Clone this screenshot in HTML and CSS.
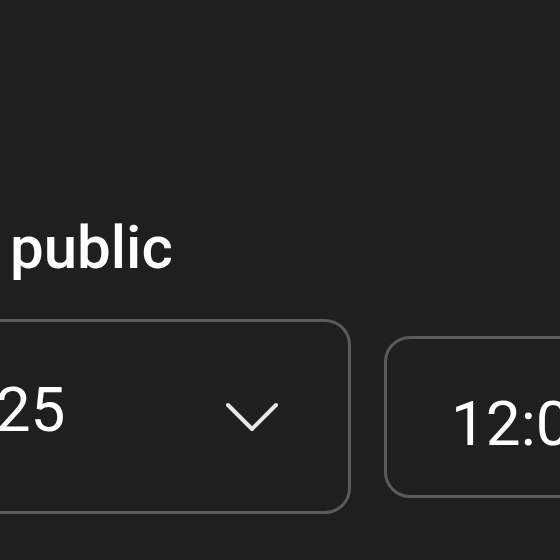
FILE: index.html
```html
<!DOCTYPE html>
<html>
<head>
<meta charset="utf-8">
<link rel="stylesheet" href="styles.css">
</head>
<body>
<div class="page">
  <p class="label">public</p>
  <div class="row">
    <div class="field date">
      <span class="value">2025</span>
      <svg class="chevron" width="52" height="30" viewBox="0 0 52 30"><polyline points="2,3 26,27 50,3" fill="none" stroke="#e8e8e8" stroke-width="4" stroke-linecap="round" stroke-linejoin="round"/></svg>
    </div>
    <div class="field time">
      <span class="value">12:00 PM</span>
    </div>
  </div>
</div>
</body>
</html>
```
FILE: styles.css
```css
html, body {
  margin: 0;
  padding: 0;
  background: #1f1f1f;
  overflow: hidden;
}
.page {
  width: 560px;
  height: 560px;
  padding-top: 212px;
  box-sizing: border-box;
  font-family: Roboto, "Noto Sans", sans-serif;
  color: #ffffff;
}
.label {
  margin: 0 0 0 10px;
  font-size: 60px;
  line-height: 72px;
  font-weight: 500;
  white-space: nowrap;
}
.row {
  display: flex;
  align-items: center;
  gap: 33px;
  margin-top: 35px;
  margin-left: -105px;
}
.field {
  flex: none;
  box-sizing: border-box;
  border: 3px solid #5a5a5a;
  border-radius: 26px;
  display: flex;
  align-items: center;
}
.date {
  width: 456px;
  height: 195px;
  padding: 0 70px 0 28px;
  justify-content: space-between;
}
.time {
  width: 300px;
  height: 162px;
  padding: 14px 0 0 64px;
}
.value {
  font-size: 62px;
  line-height: 1;
  white-space: nowrap;
}
.date .value {
  margin-top: -14px;
}
.chevron {
  display: block;
}
```
